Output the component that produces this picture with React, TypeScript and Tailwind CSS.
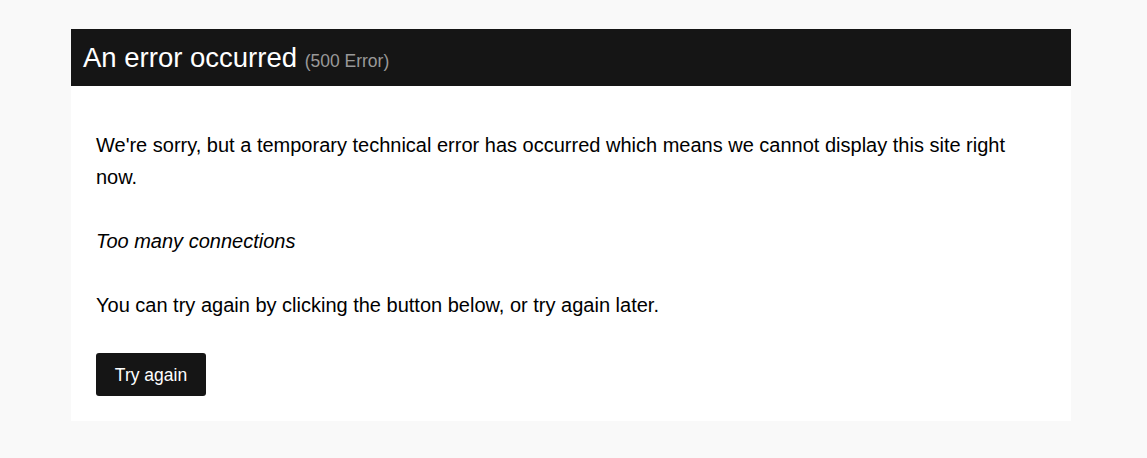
export default function App() {
  return (
    <div className="min-h-screen bg-[#f9f9f9] pt-[29px] font-['Liberation_Sans',Arial,sans-serif]">
      <div className="ml-[71px] w-[1000px]">
        <div className="flex h-[57px] items-center bg-[#151515] px-[12px]">
          <h1 className="text-[27.5px] leading-none text-white">
            An error occurred <span className="text-[17.5px] text-[#999999]">(500 Error)</span>
          </h1>
        </div>
        <div className="bg-white px-[25px] pt-[43px] pb-[25px] text-[20px] leading-[32px] text-black">
          <p className="mb-[32px]">
            We're sorry, but a temporary technical error has occurred which means we cannot display this site right now.
          </p>
          <p className="mb-[32px] italic">Too many connections</p>
          <p className="mb-[32px]">You can try again by clicking the button below, or try again later.</p>
          <button className="h-[43px] w-[110px] rounded-[3px] bg-[#151515] text-[17.5px] text-white">Try again</button>
        </div>
      </div>
    </div>
  );
}
